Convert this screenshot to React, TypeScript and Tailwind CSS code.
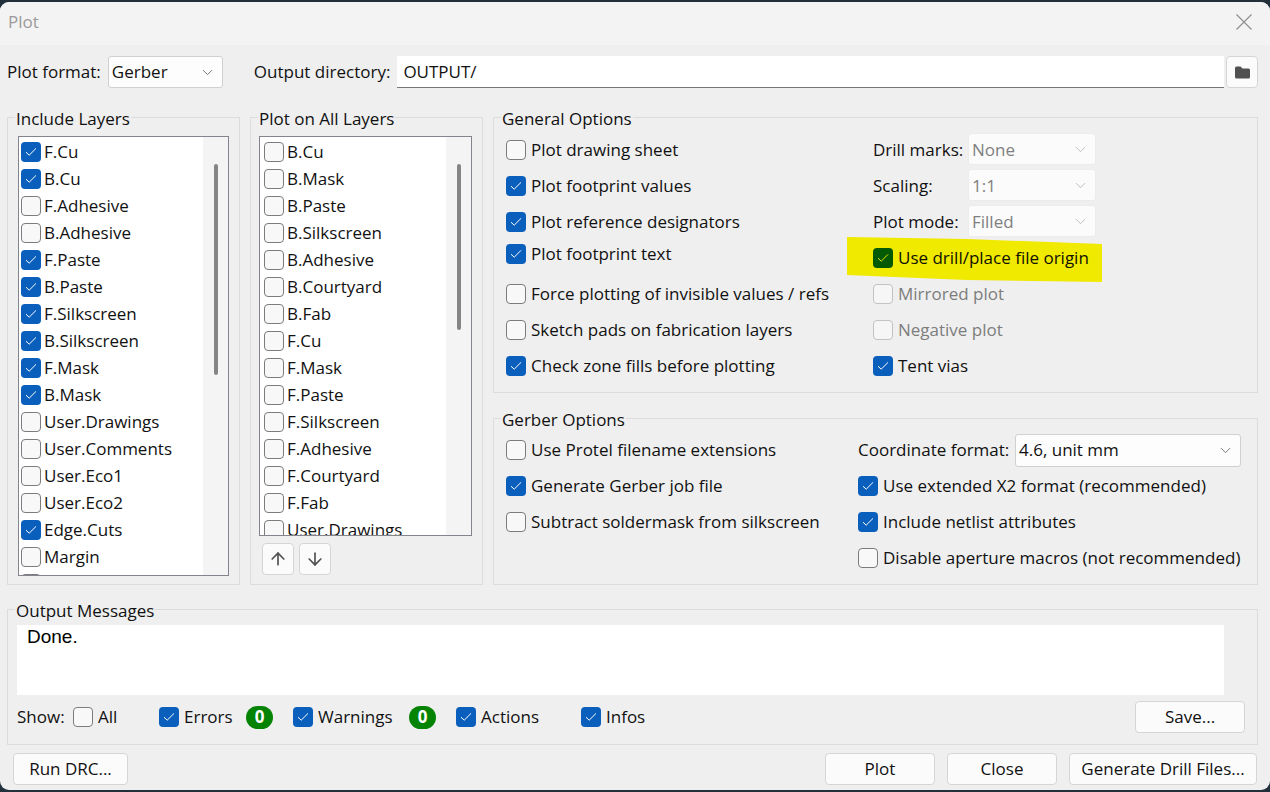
import type { ReactNode } from 'react';
import { ArrowDown, ArrowUp, ChevronDown } from 'lucide-react';

const includeLayers: [string, boolean][] = [
  ['F.Cu', true],
  ['B.Cu', true],
  ['F.Adhesive', false],
  ['B.Adhesive', false],
  ['F.Paste', true],
  ['B.Paste', true],
  ['F.Silkscreen', true],
  ['B.Silkscreen', true],
  ['F.Mask', true],
  ['B.Mask', true],
  ['User.Drawings', false],
  ['User.Comments', false],
  ['User.Eco1', false],
  ['User.Eco2', false],
  ['Edge.Cuts', true],
  ['Margin', false],
  ['', false],
];

const allLayers = [
  'B.Cu',
  'B.Mask',
  'B.Paste',
  'B.Silkscreen',
  'B.Adhesive',
  'B.Courtyard',
  'B.Fab',
  'F.Cu',
  'F.Mask',
  'F.Paste',
  'F.Silkscreen',
  'F.Adhesive',
  'F.Courtyard',
  'F.Fab',
  'User.Drawings',
];

const Check = ({ on, disabled, tone }: { on?: boolean; disabled?: boolean; tone?: 'green' }) => {
  if (on) {
    return (
      <span
        className={`flex h-5 w-5 shrink-0 items-center justify-center rounded-[4px] ${
          tone === 'green' ? 'bg-[#045a02]' : 'bg-[#0a5fbd]'
        }`}
      >
        <svg width="12" height="10" viewBox="0 0 12 10" fill="none" stroke={tone === 'green' ? '#e8e800' : '#ffffff'} strokeWidth="1">
          <path d="M1 5.2 L4.2 8.2 L11 1.4" />
        </svg>
      </span>
    );
  }
  return (
    <span
      className={`h-5 w-5 shrink-0 rounded-[4px] border ${
        disabled ? 'border-[#c2c2c2] bg-[#f6f6f6]' : 'border-[#7c7c7c] bg-[#f8f8f8]'
      }`}
    />
  );
};

const CheckRow = ({
  label,
  on,
  disabled,
  className = '',
}: {
  label: string;
  on?: boolean;
  disabled?: boolean;
  className?: string;
}) => (
  <div className={`flex items-center gap-[5px] ${className}`}>
    <Check on={on} disabled={disabled} />
    <span className={disabled ? 'text-[#7d7d7d]' : 'text-[#111111]'}>{label}</span>
  </div>
);

const Group = ({
  title,
  className = '',
  inner = '',
  children,
}: {
  title: string;
  className?: string;
  inner?: string;
  children: ReactNode;
}) => (
  <fieldset className={`border border-[#dcdcdc] ${className}`}>
    <legend className="ml-[7px] h-[24px] px-[1px] leading-[28px] text-[#111111]">{title}</legend>
    <div className={inner}>{children}</div>
  </fieldset>
);

const Select = ({ value, className = '', disabled }: { value: string; className?: string; disabled?: boolean }) => (
  <div
    className={`flex items-center justify-between rounded-[3px] border pl-[3px] pr-[6px] ${
      disabled ? 'border-[#ececec] bg-[#fbfbfb] text-[#808080]' : 'border-[#d0d0d0] bg-[#fdfdfd] text-[#111111]'
    } ${className}`}
  >
    <span className={disabled ? 'pt-[2px]' : ''}>{value}</span>
    <ChevronDown size={17} strokeWidth={1} className={disabled ? 'text-[#a8a8a8]' : 'text-[#444444]'} />
  </div>
);

const Button = ({ label, className = '' }: { label: string; className?: string }) => (
  <div className={`flex h-[32px] items-center justify-center rounded-[4px] border border-[#d5d5d5] bg-[#fbfbfb] text-[#111111] ${className}`}>
    {label}
  </div>
);

const Scrollbar = ({ thumb }: { thumb: string }) => (
  <div className="flex w-[25px] shrink-0 justify-center bg-[#f4f4f4] pt-[27px]">
    <div className={`w-[4px] rounded-full bg-[#858585] ${thumb}`} />
  </div>
);

const Badge = () => (
  <span className="flex h-[23px] w-[27px] items-center justify-center rounded-full bg-[#058305] font-bold text-white">0</span>
);

export default function App() {
  return (
    <div className="h-[792px] w-[1270px] overflow-hidden bg-[#22303c] pt-[2px] font-['Open_Sans',sans-serif] text-[17px]">
      <div className="h-[788px] rounded-[9px] bg-[#efefef]">
        {/* title bar */}
        <div className="flex h-[43px] items-center justify-between rounded-t-[9px] bg-[#f3f3f3] pb-[3px] pl-[8px] pr-[18px] text-[#9b9b9b]">
          <span>Plot</span>
          <svg width="16" height="16" viewBox="0 0 16 16" stroke="#8e8e8e" strokeWidth="1.2" fill="none">
            <path d="M0.5 0.5 L15.5 15.5 M15.5 0.5 L0.5 15.5" />
          </svg>
        </div>

        <div className="pl-[7px] pr-[12px] pt-[11px]">
          {/* format + directory */}
          <div className="flex h-[32px] items-stretch text-[#111111]">
            <span className="self-center">Plot format:</span>
            <Select value="Gerber" className="ml-[7px] w-[115px]" />
            <span className="ml-[31px] self-center">Output directory:</span>
            <div className="ml-[7px] flex flex-1 items-center border-b border-b-[#777777] bg-white pl-[6px]">OUTPUT/</div>
            <div className="ml-[2px] flex w-[32px] items-center justify-center rounded-[4px] border border-[#d5d5d5] bg-[#fbfbfb]">
              <svg width="15" height="13" viewBox="0 0 15 13" fill="#505050">
                <path d="M0 2 Q0 0.5 1.5 0.5 H5.5 L7.5 2.5 H13.5 Q15 2.5 15 4 V11 Q15 12.5 13.5 12.5 H1.5 Q0 12.5 0 11 Z" />
              </svg>
            </div>
          </div>

          <div className="mt-[17px] flex h-[480px] gap-[10px]">
            {/* include layers */}
            <Group title="Include Layers" className="w-[233px] shrink-0" inner="pl-[10px] pt-[7px]">
              <div className="flex h-[440px] w-[211px] overflow-hidden border border-[#84848c] bg-white">
                <div className="h-full flex-1 overflow-hidden pl-[2px] pt-[1px]">
                  {includeLayers.map(([name, on], i) => (
                    <div key={i} className="flex h-[27px] items-center gap-[3px] text-[#111111]">
                      <Check on={on} />
                      <span className="pt-[1px]">{name}</span>
                    </div>
                  ))}
                </div>
                <Scrollbar thumb="h-[211px]" />
              </div>
            </Group>

            {/* plot on all layers */}
            <Group title="Plot on All Layers" className="w-[233px] shrink-0" inner="pl-[8px] pt-[7px]">
              <div className="flex h-[400px] w-[213px] overflow-hidden border border-[#84848c] bg-white">
                <div className="h-full flex-1 overflow-hidden pl-[4px] pt-[1px]">
                  {allLayers.map((name) => (
                    <div key={name} className="flex h-[27px] items-center gap-[3px] text-[#111111]">
                      <Check />
                      <span className="pt-[1px]">{name}</span>
                    </div>
                  ))}
                </div>
                <Scrollbar thumb="h-[166px]" />
              </div>
              <div className="ml-[3px] mt-[7px] flex gap-[5px]">
                <div className="flex h-[32px] w-[32px] items-center justify-center rounded-[4px] border border-[#d5d5d5] bg-[#fbfbfb]">
                  <ArrowUp size={20} strokeWidth={2} className="text-[#505050]" />
                </div>
                <div className="flex h-[32px] w-[32px] items-center justify-center rounded-[4px] border border-[#d5d5d5] bg-[#fbfbfb]">
                  <ArrowDown size={20} strokeWidth={2} className="text-[#505050]" />
                </div>
              </div>
            </Group>

            <div className="flex flex-1 flex-col gap-[13px]">
              {/* general options */}
              <Group title="General Options" className="h-[288px]" inner="pl-[12px] pt-[3px]">
                <div className="flex">
                  <div className="w-[367px]">
                    <CheckRow label="Plot drawing sheet" className="h-[36px]" />
                    <CheckRow label="Plot footprint values" on className="h-[36px]" />
                    <CheckRow label="Plot reference designators" on className="h-[36px]" />
                    <CheckRow label="Plot footprint text" on className="mb-[8px] h-[28px]" />
                    <CheckRow label="Force plotting of invisible values / refs" className="h-[36px]" />
                    <CheckRow label="Sketch pads on fabrication layers" className="h-[36px]" />
                    <CheckRow label="Check zone fills before plotting" on className="h-[36px]" />
                  </div>
                  <div>
                    {[
                      ['Drill marks:', 'None'],
                      ['Scaling:', '1:1'],
                      ['Plot mode:', 'Filled'],
                    ].map(([label, value]) => (
                      <div key={label} className="flex h-[36px] items-start">
                        <span className="w-[95px] pt-[6px] leading-[24px] text-[#111111]">{label}</span>
                        <Select value={value} disabled className="mt-[1px] h-[32px] w-[128px]" />
                      </div>
                    ))}
                    {/* hand drawn marker over the option */}
                    <div className="relative h-[36px]">
                      <svg className="absolute left-[-26px] top-[-3px]" width="255" height="46" viewBox="0 0 255 46">
                        <path d="M0 0 L120 2 L255 7 L255 45 L120 43 L0 38 Z" fill="#f0e900" />
                      </svg>
                      <div className="relative flex h-full items-center gap-[5px] text-[#111100]">
                        <Check on tone="green" />
                        <span>Use drill/place file origin</span>
                      </div>
                    </div>
                    <CheckRow label="Mirrored plot" disabled className="h-[36px]" />
                    <CheckRow label="Negative plot" disabled className="h-[36px]" />
                    <CheckRow label="Tent vias" on className="h-[36px]" />
                  </div>
                </div>
              </Group>

              {/* gerber options */}
              <Group title="Gerber Options" className="h-[179px]" inner="pl-[12px] pt-[2px]">
                <div className="flex">
                  <div className="w-[352px]">
                    <CheckRow label="Use Protel filename extensions" className="h-[36px]" />
                    <CheckRow label="Generate Gerber job file" on className="h-[36px]" />
                    <CheckRow label="Subtract soldermask from silkscreen" className="h-[36px]" />
                  </div>
                  <div>
                    <div className="flex h-[36px] items-center">
                      <span className="w-[157px] text-[#111111]">Coordinate format:</span>
                      <Select value="4.6, unit mm" className="h-[33px] w-[226px]" />
                    </div>
                    <CheckRow label="Use extended X2 format (recommended)" on className="h-[36px]" />
                    <CheckRow label="Include netlist attributes" on className="h-[36px]" />
                    <CheckRow label="Disable aperture macros (not recommended)" className="h-[36px]" />
                  </div>
                </div>
              </Group>
            </div>
          </div>

          {/* output messages */}
          <Group title="Output Messages" className="mt-[12px] h-[148px]" inner="pl-[9px] pt-[4px]">
            <div className="h-[70px] w-[1207px] bg-white pl-[10px] pt-[1px] font-['Liberation_Sans',sans-serif] text-[19px] leading-[22px] text-black">
              Done.
            </div>
            <div className="flex h-[38px] items-start pr-[12px] text-[#111111]">
              <div className="mt-[6px] flex h-[32px] flex-1 items-center">
                <span className="w-[56px]">Show:</span>
                <CheckRow label="All" className="w-[86px]" />
                <CheckRow label="Errors" on className="w-[87px]" />
                <Badge />
                <CheckRow label="Warnings" on className="ml-[20px] w-[116px]" />
                <Badge />
                <CheckRow label="Actions" on className="ml-[20px] w-[125px]" />
                <CheckRow label="Infos" on />
              </div>
              <Button label="Save..." className="mt-[6px] w-[110px]" />
            </div>
          </Group>

          {/* footer */}
          <div className="mt-[8px] flex h-[32px] items-stretch pl-[6px] pr-[1px]">
            <Button label="Run DRC..." className="w-[115px]" />
            <div className="ml-auto flex gap-[12px]">
              <Button label="Plot" className="w-[110px]" />
              <Button label="Close" className="w-[110px]" />
              <Button label="Generate Drill Files..." className="w-[188px]" />
            </div>
          </div>
        </div>
      </div>
    </div>
  );
}
